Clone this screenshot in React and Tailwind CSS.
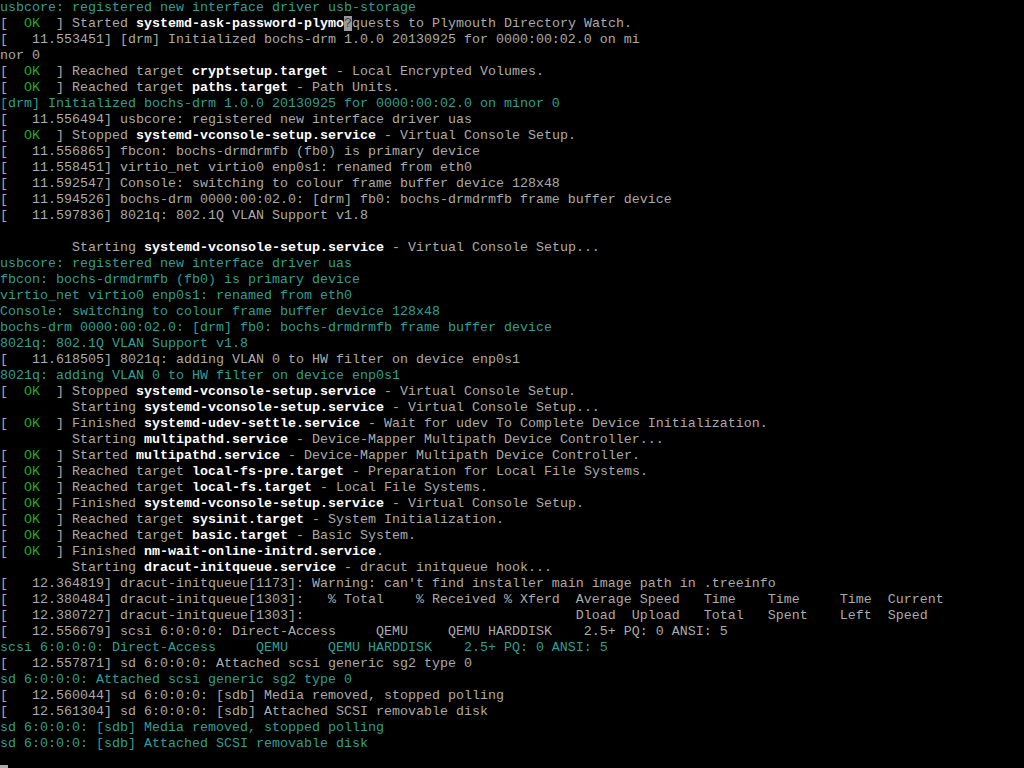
import React from 'react';

// segment kinds: t = plain gray, b = bold white, k = kernel (teal), ok = status tag, cur = cursor block
const OK = { k: 'ok' };

const lines = [
  [{ k: 'k', s: 'usbcore: registered new interface driver usb-storage' }],
  [OK, { s: 'Started ' }, { k: 'b', s: 'systemd-ask-password-plymo' }, { k: 'cur', s: '?' }, { s: 'quests to Plymouth Directory Watch.' }],
  [{ s: '[   11.553451] [drm] Initialized bochs-drm 1.0.0 20130925 for 0000:00:02.0 on mi' }],
  [{ s: 'nor 0' }],
  [OK, { s: 'Reached target ' }, { k: 'b', s: 'cryptsetup.target' }, { s: ' - Local Encrypted Volumes.' }],
  [OK, { s: 'Reached target ' }, { k: 'b', s: 'paths.target' }, { s: ' - Path Units.' }],
  [{ k: 'k', s: '[drm] Initialized bochs-drm 1.0.0 20130925 for 0000:00:02.0 on minor 0' }],
  [{ s: '[   11.556494] usbcore: registered new interface driver uas' }],
  [OK, { s: 'Stopped ' }, { k: 'b', s: 'systemd-vconsole-setup.service' }, { s: ' - Virtual Console Setup.' }],
  [{ s: '[   11.556865] fbcon: bochs-drmdrmfb (fb0) is primary device' }],
  [{ s: '[   11.558451] virtio_net virtio0 enp0s1: renamed from eth0' }],
  [{ s: '[   11.592547] Console: switching to colour frame buffer device 128x48' }],
  [{ s: '[   11.594526] bochs-drm 0000:00:02.0: [drm] fb0: bochs-drmdrmfb frame buffer device' }],
  [{ s: '[   11.597836] 8021q: 802.1Q VLAN Support v1.8' }],
  [{ s: ' ' }],
  [{ s: '         Starting ' }, { k: 'b', s: 'systemd-vconsole-setup.service' }, { s: ' - Virtual Console Setup...' }],
  [{ k: 'k', s: 'usbcore: registered new interface driver uas' }],
  [{ k: 'k', s: 'fbcon: bochs-drmdrmfb (fb0) is primary device' }],
  [{ k: 'k', s: 'virtio_net virtio0 enp0s1: renamed from eth0' }],
  [{ k: 'k', s: 'Console: switching to colour frame buffer device 128x48' }],
  [{ k: 'k', s: 'bochs-drm 0000:00:02.0: [drm] fb0: bochs-drmdrmfb frame buffer device' }],
  [{ k: 'k', s: '8021q: 802.1Q VLAN Support v1.8' }],
  [{ s: '[   11.618505] 8021q: adding VLAN 0 to HW filter on device enp0s1' }],
  [{ k: 'k', s: '8021q: adding VLAN 0 to HW filter on device enp0s1' }],
  [OK, { s: 'Stopped ' }, { k: 'b', s: 'systemd-vconsole-setup.service' }, { s: ' - Virtual Console Setup.' }],
  [{ s: '         Starting ' }, { k: 'b', s: 'systemd-vconsole-setup.service' }, { s: ' - Virtual Console Setup...' }],
  [OK, { s: 'Finished ' }, { k: 'b', s: 'systemd-udev-settle.service' }, { s: ' - Wait for udev To Complete Device Initialization.' }],
  [{ s: '         Starting ' }, { k: 'b', s: 'multipathd.service' }, { s: ' - Device-Mapper Multipath Device Controller...' }],
  [OK, { s: 'Started ' }, { k: 'b', s: 'multipathd.service' }, { s: ' - Device-Mapper Multipath Device Controller.' }],
  [OK, { s: 'Reached target ' }, { k: 'b', s: 'local-fs-pre.target' }, { s: ' - Preparation for Local File Systems.' }],
  [OK, { s: 'Reached target ' }, { k: 'b', s: 'local-fs.target' }, { s: ' - Local File Systems.' }],
  [OK, { s: 'Finished ' }, { k: 'b', s: 'systemd-vconsole-setup.service' }, { s: ' - Virtual Console Setup.' }],
  [OK, { s: 'Reached target ' }, { k: 'b', s: 'sysinit.target' }, { s: ' - System Initialization.' }],
  [OK, { s: 'Reached target ' }, { k: 'b', s: 'basic.target' }, { s: ' - Basic System.' }],
  [OK, { s: 'Finished ' }, { k: 'b', s: 'nm-wait-online-initrd.service' }, { s: '.' }],
  [{ s: '         Starting ' }, { k: 'b', s: 'dracut-initqueue.service' }, { s: ' - dracut initqueue hook...' }],
  [{ s: "[   12.364819] dracut-initqueue[1173]: Warning: can't find installer main image path in .treeinfo" }],
  [{ s: '[   12.380484] dracut-initqueue[1303]:   % Total    % Received % Xferd  Average Speed   Time    Time     Time  Current' }],
  [{ s: '[   12.380727] dracut-initqueue[1303]:                                  Dload  Upload   Total   Spent    Left  Speed' }],
  [{ s: '[   12.556679] scsi 6:0:0:0: Direct-Access     QEMU     QEMU HARDDISK    2.5+ PQ: 0 ANSI: 5' }],
  [{ k: 'k', s: 'scsi 6:0:0:0: Direct-Access     QEMU     QEMU HARDDISK    2.5+ PQ: 0 ANSI: 5' }],
  [{ s: '[   12.557871] sd 6:0:0:0: Attached scsi generic sg2 type 0' }],
  [{ k: 'k', s: 'sd 6:0:0:0: Attached scsi generic sg2 type 0' }],
  [{ s: '[   12.560044] sd 6:0:0:0: [sdb] Media removed, stopped polling' }],
  [{ s: '[   12.561304] sd 6:0:0:0: [sdb] Attached SCSI removable disk' }],
  [{ k: 'k', s: 'sd 6:0:0:0: [sdb] Media removed, stopped polling' }],
  [{ k: 'k', s: 'sd 6:0:0:0: [sdb] Attached SCSI removable disk' }],
];

const Segment = ({ seg }) => {
  if (seg.k === 'ok') {
    return (
      <>
        <span>[  </span>
        <span className="text-[#22aa22]">OK</span>
        <span>  ] </span>
      </>
    );
  }
  if (seg.k === 'b') return <span className="font-bold text-white">{seg.s}</span>;
  if (seg.k === 'k') return <span className="text-[#2f9e92]">{seg.s}</span>;
  if (seg.k === 'cur') return <span className="bg-[#9a9a9a] text-[#444]">{seg.s}</span>;
  return <span>{seg.s}</span>;
};

const App = () => {
  return (
    <div
      className="w-[1024px] h-[768px] overflow-hidden bg-black text-[#aaaaaa] text-[13.333px] leading-[16px] whitespace-pre"
      style={{ fontFamily: '"Liberation Mono", "DejaVu Sans Mono", monospace' }}
    >
      {lines.map((line, i) => (
        <div key={i} className="h-4">
          {line.map((seg, j) => (
            <Segment key={j} seg={seg} />
          ))}
        </div>
      ))}
      <div className="h-4 flex items-end">
        <div className="w-2 h-[3px] bg-[#aaaaaa]" />
      </div>
    </div>
  );
};

export default App;
